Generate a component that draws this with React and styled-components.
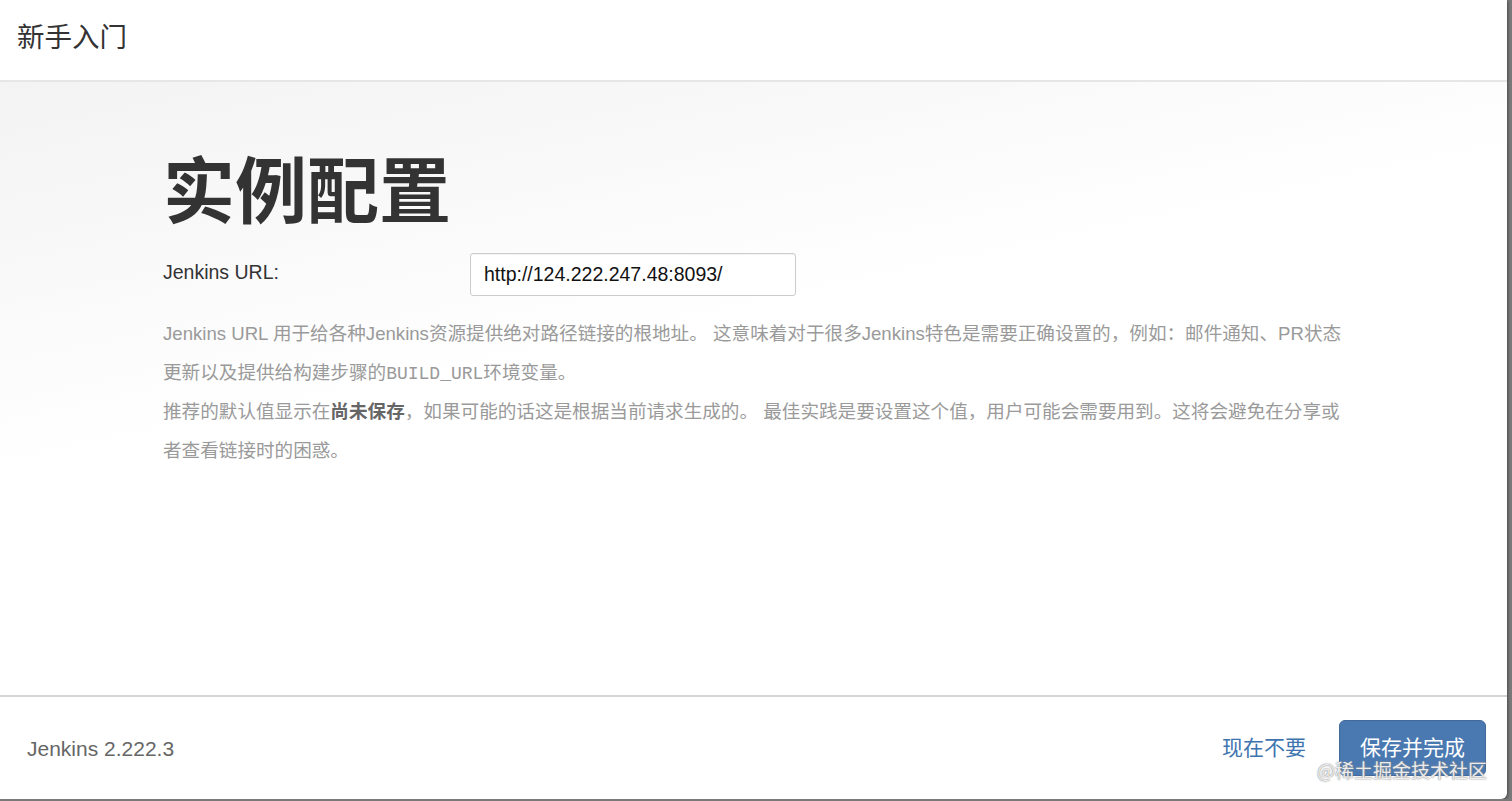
import React from 'react'
import styled, { createGlobalStyle } from 'styled-components'

const GlobalStyle = createGlobalStyle`
  html, body {
    margin: 0;
    padding: 0;
    background: #7a7a7a;
    overflow: hidden;
  }
  body {
    font-family: "Liberation Sans", "Noto Sans CJK SC", sans-serif;
    color: #333;
  }
`

const App = () => {
  return (
    <>
      <GlobalStyle />
      <Modal>
        <Header>
          <h4>新手入门</h4>
        </Header>
        <Content>
          <Title>实例配置</Title>
          <FormRow>
            <Label htmlFor="root-url">Jenkins URL:</Label>
            <Input id="root-url" defaultValue="http://124.222.247.48:8093/" />
          </FormRow>
          <Help>
            <p>
              Jenkins URL 用于给各种Jenkins资源提供绝对路径链接的根地址。 这意味着对于很多Jenkins特色是需要正确设置的，例如：邮件通知、PR状态更新以及提供给构建步骤的<code>BUILD_URL</code>环境变量。
            </p>
            <p>
              推荐的默认值显示在<strong>尚未保存</strong>，如果可能的话这是根据当前请求生成的。 最佳实践是要设置这个值，用户可能会需要用到。这将会避免在分享或者查看链接时的困惑。
            </p>
          </Help>
        </Content>
        <Footer>
          <Version>Jenkins 2.222.3</Version>
          <Actions>
            <LinkButton>现在不要</LinkButton>
            <PrimaryButton>保存并完成</PrimaryButton>
          </Actions>
          <Watermark>@稀土掘金技术社区</Watermark>
        </Footer>
      </Modal>
    </>
  )
}

export default App

const Modal = styled.div`
  width: 1507px;
  height: 799px;
  background: #fff;
  border-radius: 0 0 6px 0;
  display: flex;
  flex-direction: column;
  overflow: hidden;
  box-shadow: 1px 1px 3px rgba(0, 0, 0, 0.4);
`
const Header = styled.div`
  height: 80px;
  flex-shrink: 0;
  display: flex;
  align-items: center;
  padding: 0 17px;
  border-bottom: 2px solid #e6e6e6;
  h4 {
    margin: 0 0 10px;
    font-size: 27.5px;
    font-weight: 400;
    color: #333;
  }
`
const Content = styled.div`
  flex: 1;
  padding: 0 163px;
  background: linear-gradient(168deg, #f3f3f3 0%, #f9f9f9 22%, #fff 42%);
`
const Title = styled.h1`
  margin: 64px 0 28px;
  font-family: "Noto Sans CJK SC", sans-serif;
  font-size: 72px;
  line-height: 79px;
  font-weight: 700;
  color: #333;
`
const FormRow = styled.div`
  display: flex;
  align-items: center;
`
const Label = styled.label`
  width: 307px;
  font-size: 19.5px;
  color: #333;
  margin-top: -4px;
`
const Input = styled.input`
  box-sizing: border-box;
  width: 326px;
  height: 43px;
  padding: 0 13px;
  border: 1px solid #ccc;
  border-radius: 3px;
  font-family: "Liberation Sans", sans-serif;
  font-size: 19.5px;
  color: #111;
  background: #fff;
  box-shadow: inset 0 1px 1px rgba(0, 0, 0, 0.05);
  outline: none;
`
const Help = styled.div`
  margin-top: 19px;
  width: 1192px;
  font-size: 18.6px;
  line-height: 38.5px;
  color: #9a9a9a;
  p {
    margin: 0;
  }
  code {
    font-family: "Liberation Mono", monospace;
    font-size: 18px;
  }
  strong {
    color: #666;
    font-weight: 700;
  }
`
const Footer = styled.div`
  position: relative;
  height: 102px;
  flex-shrink: 0;
  display: flex;
  align-items: center;
  justify-content: space-between;
  padding: 0 21px 0 27px;
  border-top: 2px solid #d4d4d4;
`
const Version = styled.span`
  font-size: 21px;
  color: #666;
  margin-top: 2px;
`
const Actions = styled.div`
  display: flex;
  align-items: center;
  gap: 33px;
  margin-top: -4px;
`
const LinkButton = styled.button`
  border: none;
  background: none;
  padding: 0;
  font-family: "Noto Sans CJK SC", sans-serif;
  font-size: 21px;
  color: #3d74b0;
  cursor: pointer;
`
const PrimaryButton = styled.button`
  width: 147px;
  height: 56px;
  margin-top: 4px;
  padding: 0 0 4px;
  border: 1px solid #41699a;
  border-radius: 6px;
  background: #4a79b1;
  color: #fff;
  font-family: "Noto Sans CJK SC", sans-serif;
  font-size: 21px;
  cursor: pointer;
`
const Watermark = styled.span`
  position: absolute;
  right: 20px;
  bottom: 16px;
  font-family: "Noto Sans CJK SC", sans-serif;
  font-size: 19px;
  color: rgba(255, 255, 255, 0.85);
  text-shadow: 0 0 1px #888, 0 0 2px #999;
  pointer-events: none;
`
